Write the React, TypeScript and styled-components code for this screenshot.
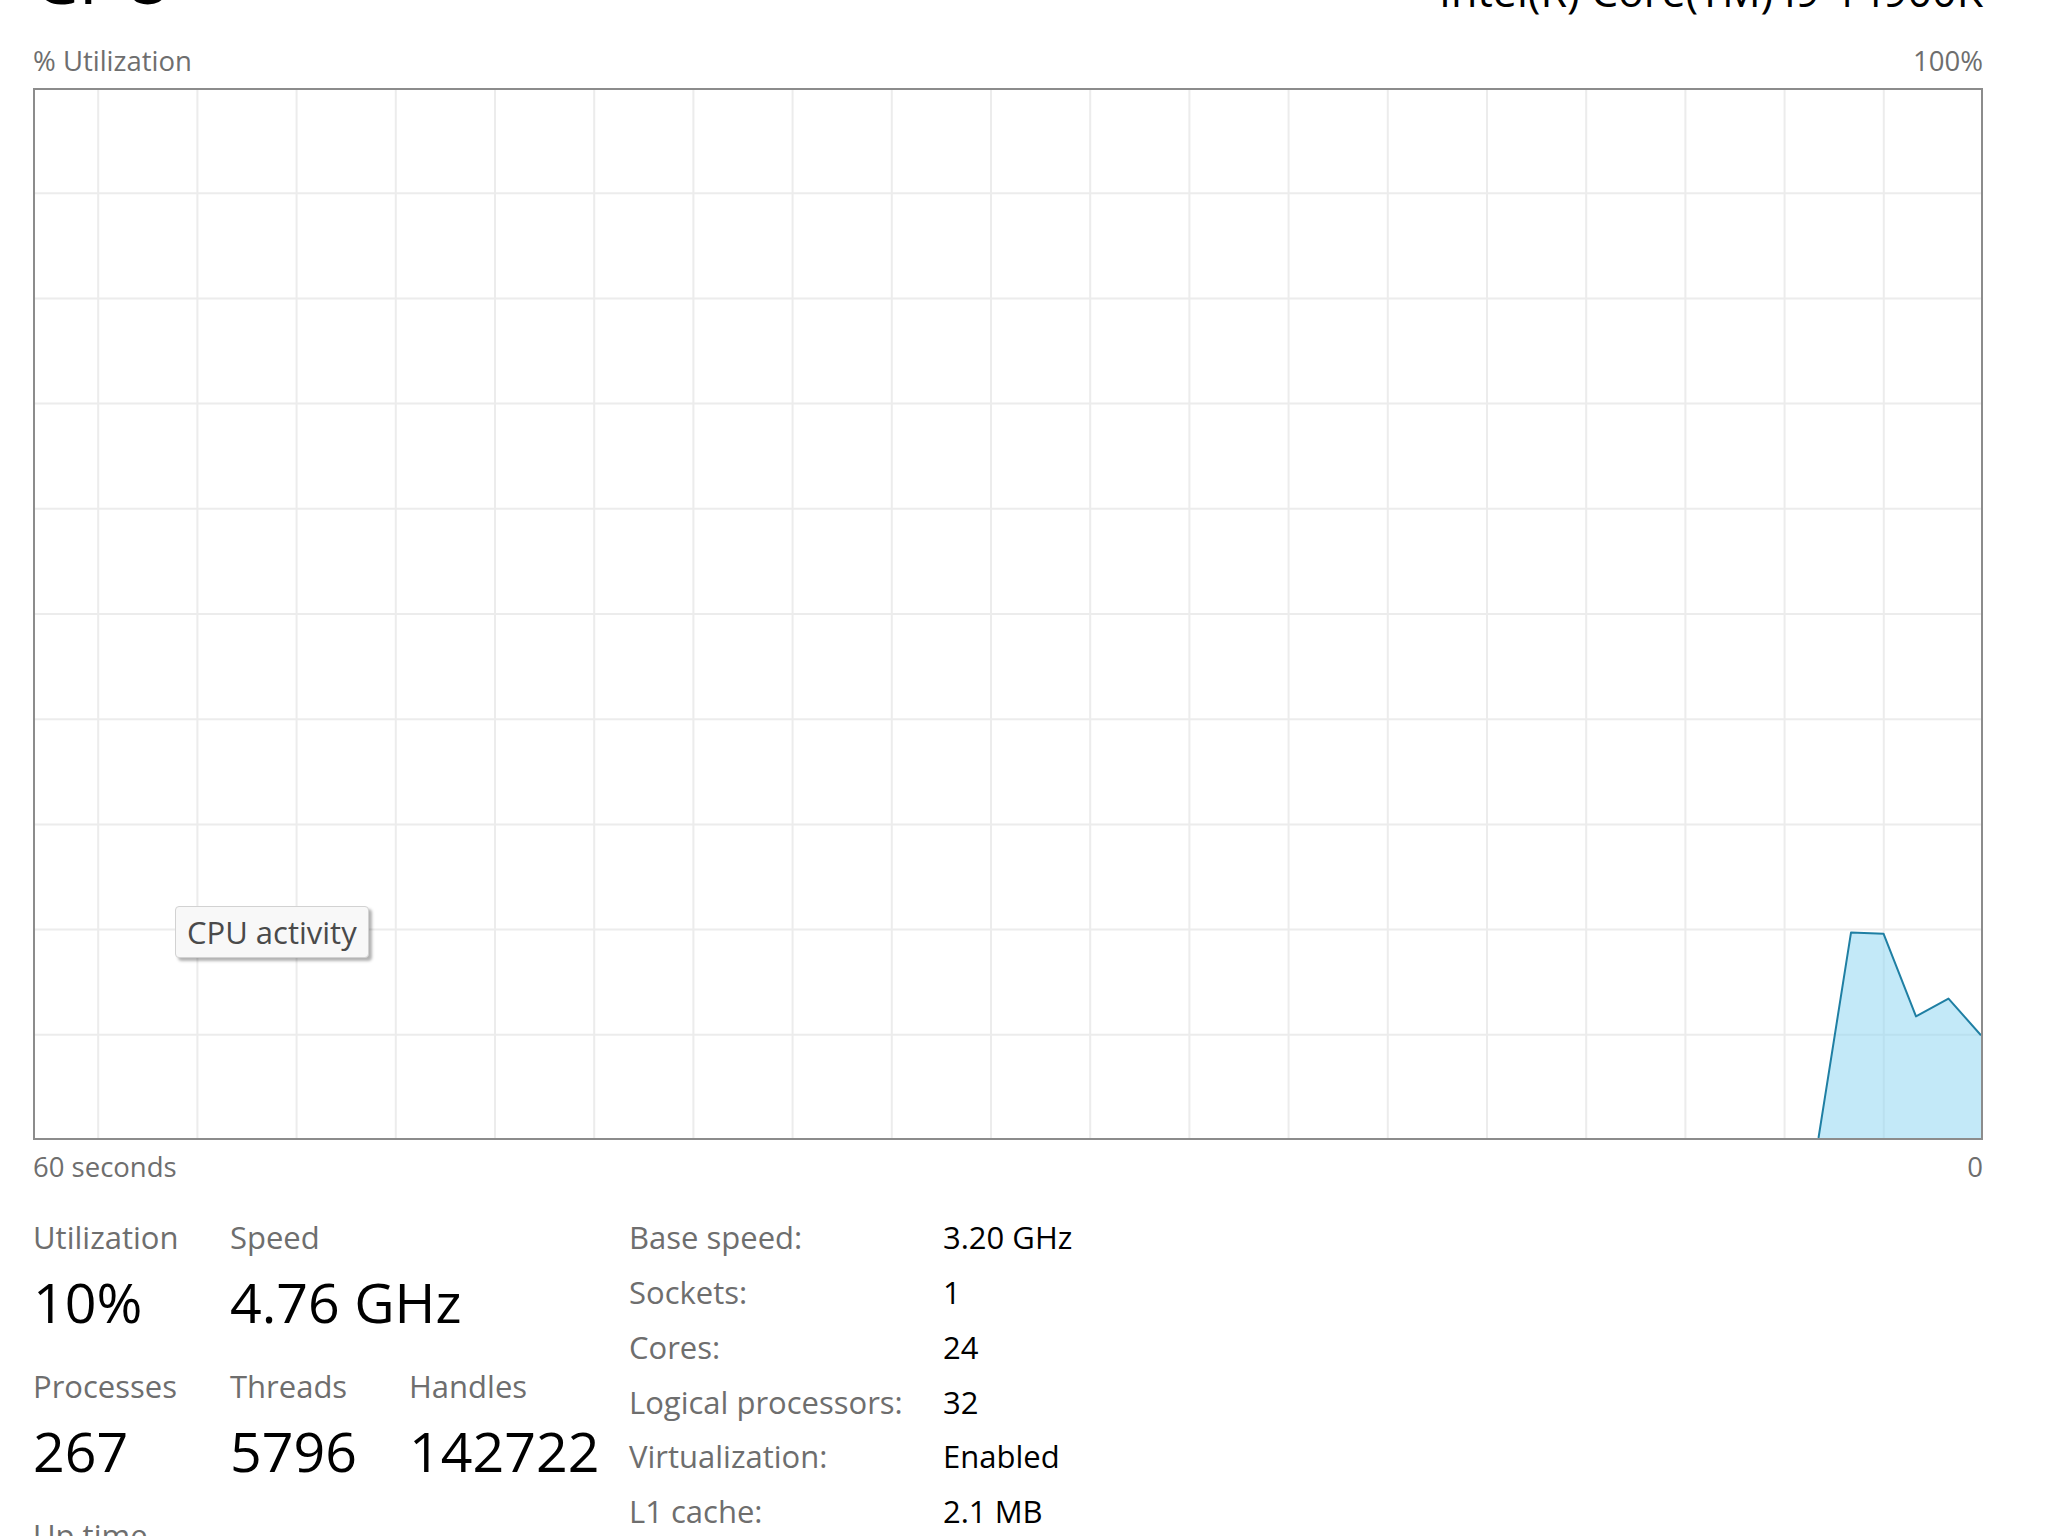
import { Fragment } from 'react';
import styled, { createGlobalStyle } from 'styled-components';

const GlobalStyle = createGlobalStyle`
  html, body {
    margin: 0;
    padding: 0;
    background: #ffffff;
    overflow: hidden;
  }
  body {
    font-family: 'Open Sans', 'Noto Sans', 'Liberation Sans', sans-serif;
    color: #000000;
  }
`;

type Sample = { k: number; v: number };

// seconds ago -> % utilization
const samples: Sample[] = [
  { k: 5, v: 0 },
  { k: 4, v: 19.6 },
  { k: 3, v: 19.5 },
  { k: 2, v: 11.6 },
  { k: 1, v: 13.3 },
  { k: 0, v: 9.8 },
];

const CHART_W = 1946;
const CHART_H = 1048;
const STEP = 32.5;
const COL = 99.2;
const ROW = 105.2;

const Styled = {
  Page: styled.div`
    height: 1536px;
    overflow: hidden;
    padding: 0 65px 0 33px;
    box-sizing: border-box;
  `,
  Header: styled.header`
    display: flex;
    justify-content: space-between;
    align-items: flex-end;
    margin-top: -60px;
  `,
  Title: styled.h1`
    margin: 0;
    font-size: 72px;
    line-height: 72px;
    font-weight: 400;
    color: #000;
  `,
  Model: styled.div`
    font-size: 43px;
    line-height: 43px;
    color: #000;
  `,
  AxisRow: styled.div<{ $top: number }>`
    display: flex;
    justify-content: space-between;
    margin-top: ${({ $top }) => $top}px;
    font-size: 27.5px;
    line-height: 34px;
    color: #6e6e6e;
  `,
  Chart: styled.div`
    position: relative;
    margin-top: 10px;
    width: 1950px;
    height: 1052px;
    box-sizing: border-box;
    border: 2px solid #8c8c8c;
    background: #fff;
    svg {
      display: block;
    }
  `,
  Tooltip: styled.div`
    position: absolute;
    left: 140px;
    top: 816px;
    padding: 0 11px;
    height: 52px;
    box-sizing: border-box;
    line-height: 50px;
    font-size: 31px;
    color: #4a4a4a;
    background: #f8f8f8;
    border: 1px solid #d2d2d2;
    border-radius: 4px;
    box-shadow: 3px 3px 3px rgba(0, 0, 0, 0.3);
    white-space: nowrap;
  `,
  Stats: styled.section`
    display: flex;
    margin-top: 26px;
  `,
  Summary: styled.div`
    display: grid;
    grid-template-columns: 197px 179px 220px;
    row-gap: 27px;
    width: 596px;
    align-content: start;
  `,
  Stat: styled.div<{ $span?: number }>`
    display: flex;
    flex-direction: column;
    grid-column: span ${({ $span }) => $span ?? 1};
  `,
  StatLabel: styled.div`
    font-size: 31px;
    line-height: 55px;
    color: #6e6e6e;
    white-space: nowrap;
  `,
  StatValue: styled.div`
    margin-top: 7px;
    font-size: 55.5px;
    line-height: 60px;
    color: #000;
    white-space: nowrap;
  `,
  Specs: styled.dl`
    display: grid;
    grid-template-columns: 314px auto;
    margin: 0;
    font-size: 31px;
    line-height: 54.85px;
  `,
  SpecKey: styled.dt`
    color: #6e6e6e;
    white-space: nowrap;
  `,
  SpecValue: styled.dd`
    margin: 0;
    color: #000;
    white-space: nowrap;
  `,
};

const CpuGraph = () => {
  const pts = samples.map(({ k, v }) => [CHART_W - k * STEP, CHART_H - (v / 100) * CHART_H]);
  const line = pts.map((p) => p.join(',')).join(' ');
  const area = `${line} ${CHART_W},${CHART_H}`;

  return (
    <svg width={CHART_W} height={CHART_H} viewBox={`0 0 ${CHART_W} ${CHART_H}`}>
      {Array.from({ length: 19 }, (_, i) => {
        const x = CHART_W + 2 - (i + 1) * COL;
        return <line key={`v${i}`} x1={x} y1={0} x2={x} y2={CHART_H} stroke="#ececec" strokeWidth={2} />;
      })}
      {Array.from({ length: 9 }, (_, i) => {
        const y = (i + 1) * ROW - 2;
        return <line key={`h${i}`} x1={0} y1={y} x2={CHART_W} y2={y} stroke="#ececec" strokeWidth={2} />;
      })}
      <polygon points={area} fill="#8cd5f2" fillOpacity={0.52} />
      <polyline points={line} fill="none" stroke="#1f7fa3" strokeWidth={2} strokeLinejoin="round" />
    </svg>
  );
};

const specs: [string, string][] = [
  ['Base speed:', '3.20 GHz'],
  ['Sockets:', '1'],
  ['Cores:', '24'],
  ['Logical processors:', '32'],
  ['Virtualization:', 'Enabled'],
  ['L1 cache:', '2.1 MB'],
  ['L2 cache:', '32.0 MB'],
  ['L3 cache:', '36.0 MB'],
];

const App = () => {
  return (
    <>
      <GlobalStyle />
      <Styled.Page>
        <Styled.Header>
          <Styled.Title>CPU</Styled.Title>
          <Styled.Model>Intel(R) Core(TM) i9-14900K</Styled.Model>
        </Styled.Header>

        <Styled.AxisRow $top={32}>
          <span>% Utilization</span>
          <span>100%</span>
        </Styled.AxisRow>

        <Styled.Chart>
          <CpuGraph />
          <Styled.Tooltip>CPU activity</Styled.Tooltip>
        </Styled.Chart>

        <Styled.AxisRow $top={10}>
          <span>60 seconds</span>
          <span>0</span>
        </Styled.AxisRow>

        <Styled.Stats>
          <Styled.Summary>
            <Styled.Stat>
              <Styled.StatLabel>Utilization</Styled.StatLabel>
              <Styled.StatValue>10%</Styled.StatValue>
            </Styled.Stat>
            <Styled.Stat $span={2}>
              <Styled.StatLabel>Speed</Styled.StatLabel>
              <Styled.StatValue>4.76 GHz</Styled.StatValue>
            </Styled.Stat>
            <Styled.Stat>
              <Styled.StatLabel>Processes</Styled.StatLabel>
              <Styled.StatValue>267</Styled.StatValue>
            </Styled.Stat>
            <Styled.Stat>
              <Styled.StatLabel>Threads</Styled.StatLabel>
              <Styled.StatValue>5796</Styled.StatValue>
            </Styled.Stat>
            <Styled.Stat>
              <Styled.StatLabel>Handles</Styled.StatLabel>
              <Styled.StatValue>142722</Styled.StatValue>
            </Styled.Stat>
            <Styled.Stat $span={3}>
              <Styled.StatLabel>Up time</Styled.StatLabel>
              <Styled.StatValue>0:00:21:37</Styled.StatValue>
            </Styled.Stat>
          </Styled.Summary>

          <Styled.Specs>
            {specs.map(([k, v]) => (
              <Fragment key={k}>
                <Styled.SpecKey>{k}</Styled.SpecKey>
                <Styled.SpecValue>{v}</Styled.SpecValue>
              </Fragment>
            ))}
          </Styled.Specs>
        </Styled.Stats>
      </Styled.Page>
    </>
  );
};

export default App;
